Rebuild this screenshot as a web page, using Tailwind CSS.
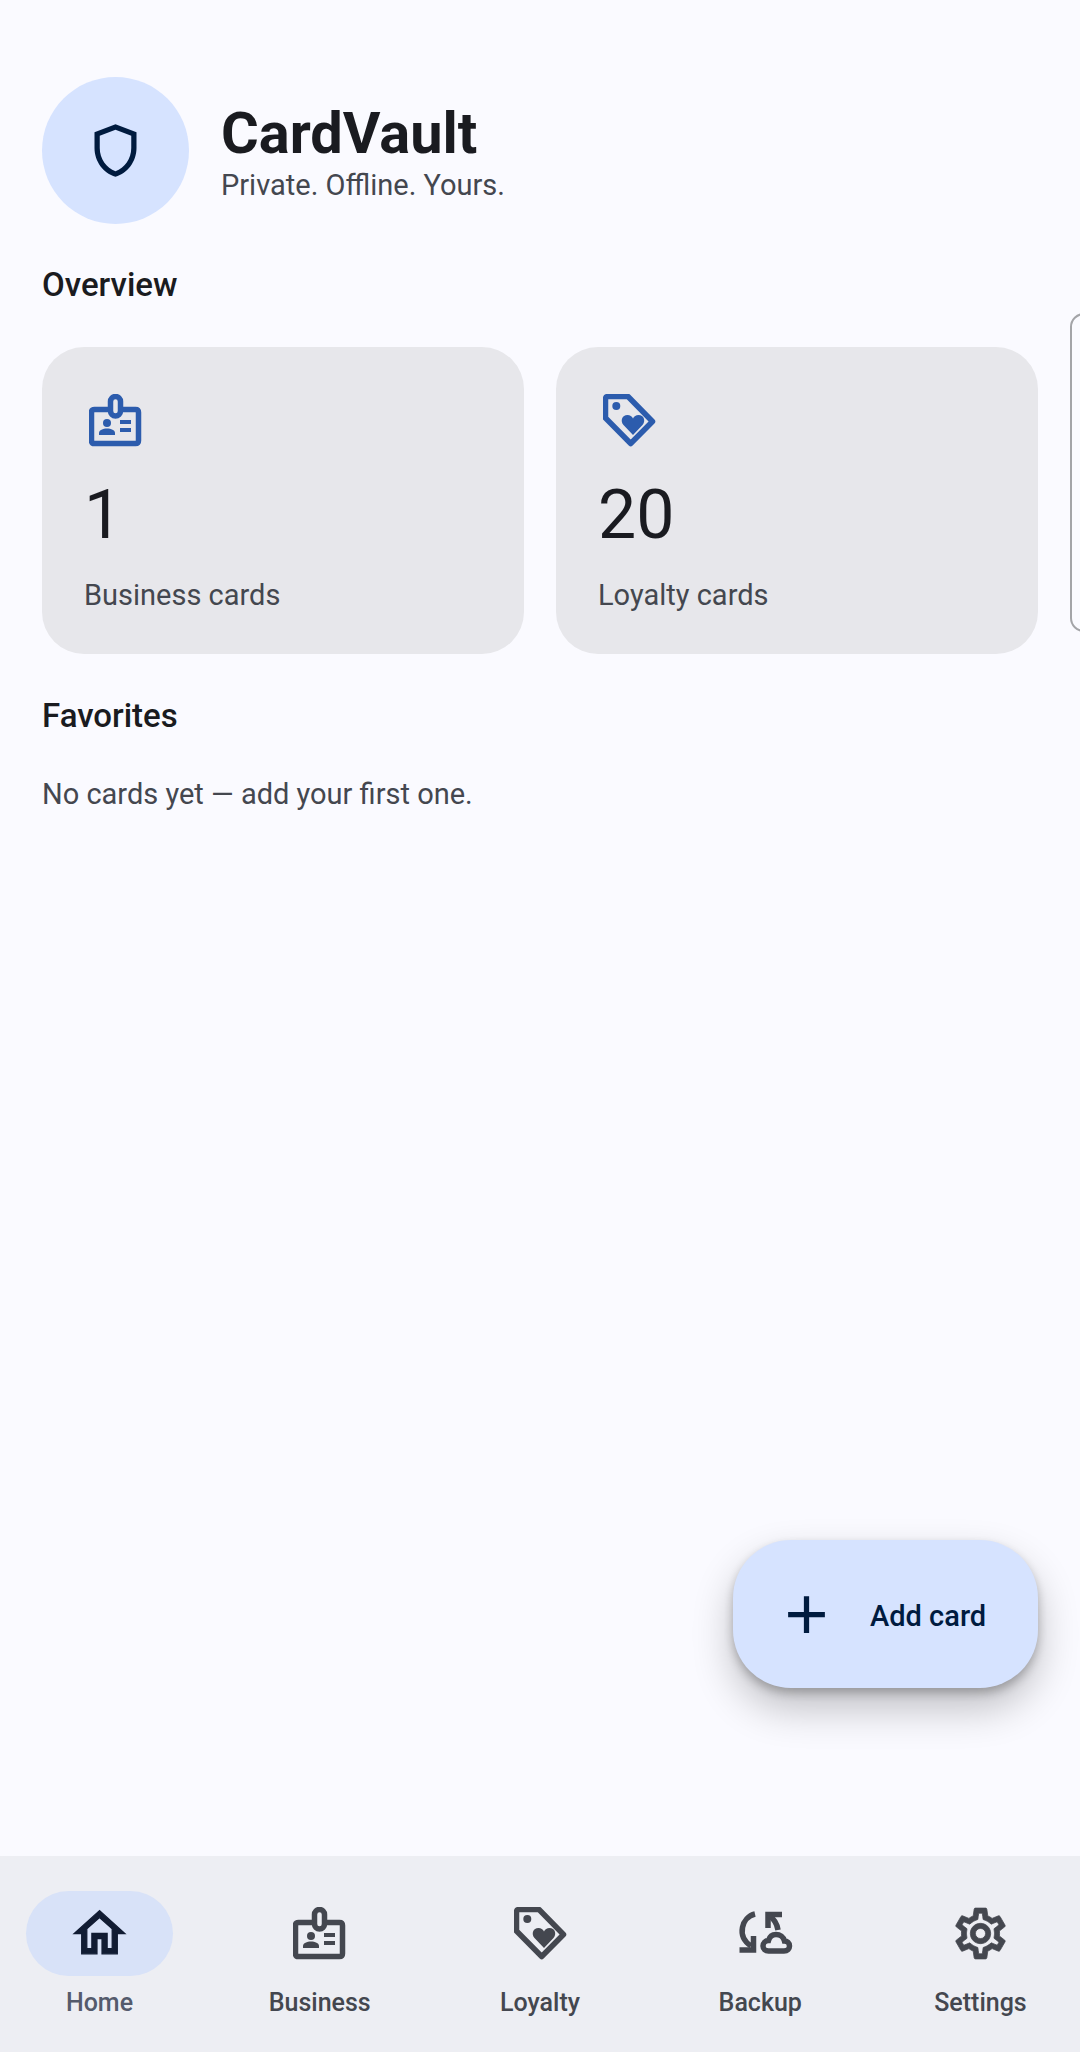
<!DOCTYPE html>
<html lang="en">
  <head>
    <meta charset="UTF-8" />
    <meta name="viewport" content="width=device-width, initial-scale=1.0" />
    <title>CardVault</title>
    <script src="https://cdn.jsdelivr.net/npm/@tailwindcss/browser@4"></script>
  </head>
  <body class="bg-[#fafaff] font-['Roboto',sans-serif]">
    <svg class="absolute w-0 h-0" aria-hidden="true">
      <symbol id="badge" viewBox="0 0 53 53">
        <path d="M31.5 15.5H46.5Q49.5 15.5 49.5 18.5V46.5Q49.5 49.5 46.5 49.5H5.5Q2.5 49.5 2.5 46.5V18.5Q2.5 15.5 5.5 15.5H21.5" fill="none" stroke="currentColor" stroke-width="5.5" />
        <rect x="21.5" y="2.5" width="10" height="19.5" rx="5" fill="none" stroke="currentColor" stroke-width="5.5" />
        <circle cx="18" cy="29" r="4" fill="currentColor" />
        <path d="M10 41V39C10 36 14 34.5 18 34.5S26 36 26 39V41Z" fill="currentColor" />
        <path d="M31 26H42V30H31ZM31 34H42V38H31Z" fill="currentColor" />
      </symbol>
      <symbol id="tag" viewBox="0 0 53 53">
        <path d="M2.5 5Q2.5 2.5 5 2.5H25L49.5 27.5L27.7 49.5L2.5 24Z" fill="none" stroke="currentColor" stroke-width="5.5" stroke-linejoin="round" />
        <circle cx="13.3" cy="12" r="4" fill="currentColor" />
        <path d="M30 41L20.5 31C17 27 19 21 24.5 21C27 21 29 22.5 30 24.5C31 22.5 33 21 35.5 21C41 21 43 27 39.5 31Z" fill="currentColor" />
      </symbol>
    </svg>

    <div class="relative flex flex-col h-[2052px] w-[1080px] overflow-hidden">
      <main class="flex-1 px-[42px] pt-[77px]">
        <header class="flex gap-[32px]">
          <div class="w-[147px] h-[147px] rounded-full bg-[#d6e3ff] flex items-center justify-center text-[#001b3f]">
            <svg class="w-[63px] h-[63px]" viewBox="0 0 24 24" fill="currentColor">
              <path d="M12 2L4 5v6.09c0 5.05 3.41 9.76 8 10.91 4.59-1.15 8-5.86 8-10.91V5l-8-3zm6 9.09c0 4-2.55 7.7-6 8.83-3.45-1.13-6-4.82-6-8.83v-4.7l6-2.25 6 2.25v4.7z" />
            </svg>
          </div>
          <div class="mt-6">
            <h1 class="text-[57.75px] leading-[64px] font-bold text-[#1a1b20]">CardVault</h1>
            <p class="mt-[2px] text-[29px] leading-[36px] text-[#44474f]">Private. Offline. Yours.</p>
          </div>
        </header>

        <h2 class="mt-[41px] text-[33px] leading-[40px] font-medium text-[#1a1b20]">Overview</h2>

        <div class="mt-[42px] flex items-start gap-[32px]">
          <section class="shrink-0 w-[482px] h-[307px] rounded-[42px] bg-[#e7e7eb] p-[42px]">
            <svg class="w-[63px] h-[63px] p-[5px] text-[#2c5cad]"><use href="#badge" /></svg>
            <p class="mt-[23px] text-[68px] leading-[80px] text-[#1a1b20]">1</p>
            <p class="mt-[22px] text-[29px] leading-[36px] text-[#44474f]">Business cards</p>
          </section>
          <section class="shrink-0 w-[482px] h-[307px] rounded-[42px] bg-[#e7e7eb] p-[42px]">
            <svg class="w-[63px] h-[63px] p-[5px] text-[#2c5cad]"><use href="#tag" /></svg>
            <p class="mt-[23px] text-[68px] leading-[80px] text-[#1a1b20]">20</p>
            <p class="mt-[22px] text-[29px] leading-[36px] text-[#44474f]">Loyalty cards</p>
          </section>
          <section class="shrink-0 w-[300px] h-[319px] -mt-[34px] rounded-[14px] border-2 border-[#a3a4a8]"></section>
        </div>

        <h2 class="mt-[42px] text-[33px] leading-[40px] font-medium text-[#1a1b20]">Favorites</h2>
        <p class="mt-[40px] text-[29px] leading-[36px] text-[#44474f]">No cards yet — add your first one.</p>
      </main>

      <button class="absolute right-[42px] top-[1540px] w-[305px] h-[148px] rounded-[58px] bg-[#d6e3ff] flex items-center pl-[42px] gap-[32px] text-[#001b3f] shadow-[0_5px_10px_rgba(0,0,0,0.24),0_20px_40px_rgba(0,0,0,0.24)]">
        <svg class="w-[63px] h-[63px]" viewBox="0 0 24 24" fill="currentColor"><path d="M19 13h-6v6h-2v-6H5v-2h6V5h2v6h6v2z" /></svg>
        <span class="pt-[5px] text-[29px] font-medium">Add card</span>
      </button>

      <nav class="h-[196px] bg-[#edeef3] px-[26px] pt-[35px] flex justify-between">
        <a class="w-[147px] flex flex-col items-center">
          <span class="w-full h-[85px] rounded-full bg-[#d8e2f8] flex items-center justify-center text-[#111c33]">
            <svg class="w-[61px] h-[61px]" viewBox="0 0 24 24" fill="currentColor" stroke="currentColor" stroke-width="0.5"><path d="M12 5.69l5 4.5V18h-2v-6H9v6H7v-7.81l5-4.5M12 3L2 12h3v8h6v-6h2v6h6v-8h3L12 3z" /></svg>
          </span>
          <span class="mt-[11px] text-[25px] leading-[32px] font-medium text-[#555b6c]">Home</span>
        </a>
        <a class="w-[147px] flex flex-col items-center">
          <span class="w-full h-[85px] flex items-center justify-center text-[#44474f]">
            <svg class="w-[53px] h-[53px]"><use href="#badge" /></svg>
          </span>
          <span class="mt-[11px] text-[25px] leading-[32px] font-medium text-[#44474f]">Business</span>
        </a>
        <a class="w-[147px] flex flex-col items-center">
          <span class="w-full h-[85px] flex items-center justify-center text-[#44474f]">
            <svg class="w-[53px] h-[53px]"><use href="#tag" /></svg>
          </span>
          <span class="mt-[11px] text-[25px] leading-[32px] font-medium text-[#44474f]">Loyalty</span>
        </a>
        <a class="w-[147px] flex flex-col items-center">
          <span class="w-full h-[85px] flex items-center justify-center text-[#44474f]">
            <svg class="w-[66px] h-[61px]" viewBox="0 0 66 61" fill="none" stroke="currentColor" stroke-width="5.5">
              <path d="M28 11C15 14 9 33 24 43" />
              <path d="M12.5 47H26.5V33" />
              <path d="M55 11.5H41V25" />
              <path d="M41 11.5C46 15 50 20 51 27" />
              <path d="M41.5 48H57C60.5 48 62.5 45.5 62.5 43C62.5 40 60 38 57.5 38C56.5 34 53 31.5 49 31.5C45 31.5 42.5 34 41.5 37.5C38.5 37.5 36 40 36 43C36 46 38.5 48 41.5 48Z" />
            </svg>
          </span>
          <span class="mt-[11px] text-[25px] leading-[32px] font-medium text-[#44474f]">Backup</span>
        </a>
        <a class="w-[147px] flex flex-col items-center">
          <span class="w-full h-[85px] flex items-center justify-center text-[#44474f]">
            <svg class="w-[61px] h-[61px]" viewBox="0 0 24 24" fill="currentColor" stroke="currentColor" stroke-width="0.3"><path d="M19.43 12.98c.04-.32.07-.64.07-.98 0-.34-.03-.66-.07-.98l2.11-1.65c.19-.15.24-.42.12-.64l-2-3.46c-.09-.16-.26-.25-.44-.25-.06 0-.12.01-.17.03l-2.49 1c-.52-.4-1.08-.73-1.69-.98l-.38-2.65C14.46 2.18 14.25 2 14 2h-4c-.25 0-.46.18-.49.42l-.38 2.65c-.61.25-1.17.59-1.69.98l-2.49-1c-.06-.02-.12-.03-.18-.03-.17 0-.34.09-.43.25l-2 3.46c-.13.22-.07.49.12.64l2.11 1.65c-.04.32-.07.65-.07.98 0 .33.03.66.07.98l-2.11 1.65c-.19.15-.24.42-.12.64l2 3.46c.09.16.26.25.44.25.06 0 .12-.01.17-.03l2.49-1c.52.4 1.08.73 1.69.98l.38 2.65c.03.24.24.42.49.42h4c.25 0 .46-.18.49-.42l.38-2.65c.61-.25 1.17-.59 1.69-.98l2.49 1c.06.02.12.03.18.03.17 0 .34-.09.43-.25l2-3.46c.12-.22.07-.49-.12-.64l-2.11-1.65zm-1.98-1.71c.04.31.05.52.05.73 0 .21-.02.43-.05.73l-.14 1.13.89.7 1.08.84-.7 1.21-1.27-.51-1.04-.42-.9.68c-.43.32-.84.56-1.25.73l-1.06.43-.16 1.13-.2 1.35h-1.4l-.19-1.35-.16-1.13-1.06-.43c-.43-.18-.83-.41-1.23-.71l-.91-.7-1.06.43-1.27.51-.7-1.21 1.08-.84.89-.7-.14-1.13c-.03-.31-.05-.54-.05-.74s.02-.43.05-.73l.14-1.13-.89-.7-1.08-.84.7-1.21 1.27.51 1.04.42.9-.68c.43-.32.84-.56 1.25-.73l1.06-.43.16-1.13.2-1.35h1.39l.19 1.35.16 1.13 1.06.43c.43.18.83.41 1.23.71l.91.7 1.06-.43 1.27-.51.7 1.21-1.07.85-.89.7.14 1.13zM12 8c-2.21 0-4 1.79-4 4s1.79 4 4 4 4-1.79 4-4-1.79-4-4-4zm0 6c-1.1 0-2-.9-2-2s.9-2 2-2 2 .9 2 2-.9 2-2 2z" /></svg>
          </span>
          <span class="mt-[11px] text-[25px] leading-[32px] font-medium text-[#44474f]">Settings</span>
        </a>
      </nav>
    </div>
  </body>
</html>
